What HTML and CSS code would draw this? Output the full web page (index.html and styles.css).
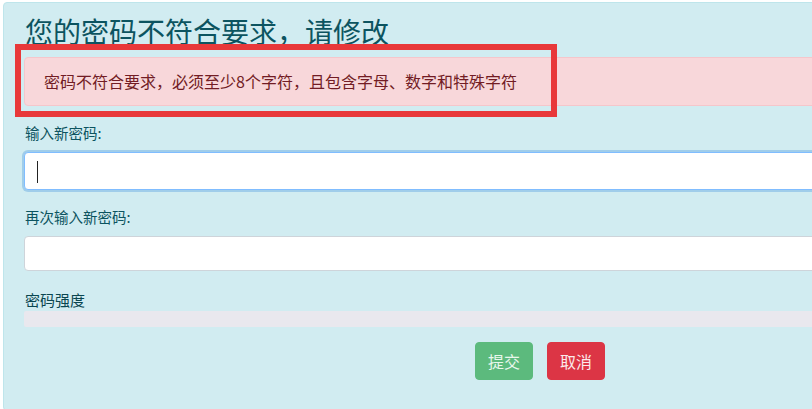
FILE: index.html
```html
<!DOCTYPE html>
<html lang="zh-CN">
<head>
<meta charset="utf-8">
<title>修改密码</title>
<link rel="stylesheet" href="styles.css">
</head>
<body>
<div class="panel">
  <h2 class="title">您的密码不符合要求，请修改</h2>
  <div class="alert">密码不符合要求，必须至少8个字符，且包含字母、数字和特殊字符</div>
  <form class="form">
    <div class="group">
      <label class="label">输入新密码:</label>
      <div class="field">
        <input class="control focused" type="password">
        <span class="caret"></span>
      </div>
    </div>
    <div class="group">
      <label class="label">再次输入新密码:</label>
      <input class="control short" type="password">
    </div>
    <div class="strength">
      <div class="label strong">密码强度</div>
      <div class="progress"></div>
    </div>
    <div class="actions">
      <button type="button" class="btn ok">提交</button>
      <button type="button" class="btn cancel">取消</button>
    </div>
  </form>
</div>
<div class="mark"></div>
</body>
</html>
```
FILE: styles.css
```css
html, body {
  margin: 0;
  padding: 0;
  background: #ffffff;
  overflow: hidden;
  font-family: "Noto Sans CJK SC", "Noto Sans", sans-serif;
}
body {
  position: relative;
  width: 812px;
  height: 409px;
}
.panel {
  margin: 2px 0 0 3px;
  width: 1032px;
  padding: 11px 21px 30px 20px;
  background: #d1ecf1;
  border: 1px solid #bee5eb;
  border-radius: 4px;
  color: #0c5460;
}
.title {
  margin: 0 0 9px 1px;
  font-size: 28px;
  font-weight: 400;
  line-height: 34px;
  color: #0c5460;
}
.alert {
  margin: 0 0 16px 0;
  padding: 12px 20px 12px 19px;
  background: #f8d7da;
  border: 1px solid #f5c6cb;
  border-radius: 4px;
  color: #721c24;
  font-size: 16px;
  line-height: 23px;
}
.form {
  display: flex;
  flex-direction: column;
}
.group {
  display: flex;
  flex-direction: column;
  margin-bottom: 16px;
}
.label {
  font-size: 14.5px;
  line-height: 22px;
  margin-bottom: 8px;
  margin-left: 1px;
  color: #0c5460;
}
.field {
  position: relative;
  display: flex;
}
.control {
  box-sizing: border-box;
  width: 100%;
  height: 38px;
  padding: 6px 12px;
  border: 1px solid #ced4da;
  border-radius: 4px;
  background: #ffffff;
  font-size: 16px;
  outline: none;
}
.control.short {
  height: 35px;
}
.control.focused {
  border-color: #80bdff;
  box-shadow: 0 0 0 2px rgba(70, 150, 220, 0.35);
}
.caret {
  position: absolute;
  left: 13px;
  top: 9px;
  width: 1px;
  height: 22px;
  background: #222;
}
.strength {
  display: flex;
  flex-direction: column;
}
.label.strong {
  font-size: 15px;
  font-weight: 400;
  margin-bottom: 0;
  line-height: 23px;
  margin-top: 1px;
  color: #0a4650;
}
.progress {
  height: 16px;
  background: #e9e8ee;
  border-radius: 2px;
}
.actions {
  display: flex;
  justify-content: center;
  gap: 14px;
  margin-top: 15px;
}
.btn {
  height: 38px;
  padding: 0 12px;
  border: 1px solid transparent;
  border-radius: 4px;
  font-family: "Noto Sans CJK SC", sans-serif;
  font-size: 16px;
  line-height: 36px;
  width: 58px;
}
.btn.ok {
  background: #5cba7d;
  border-color: #5cba7d;
  color: #e8f7ec;
}
.btn.cancel {
  background: #dc3545;
  border-color: #dc3545;
  color: #fbe9eb;
}
.mark {
  position: absolute;
  left: 15px;
  top: 44px;
  width: 530px;
  height: 61px;
  border: 6px solid #e8383a;
}
```
